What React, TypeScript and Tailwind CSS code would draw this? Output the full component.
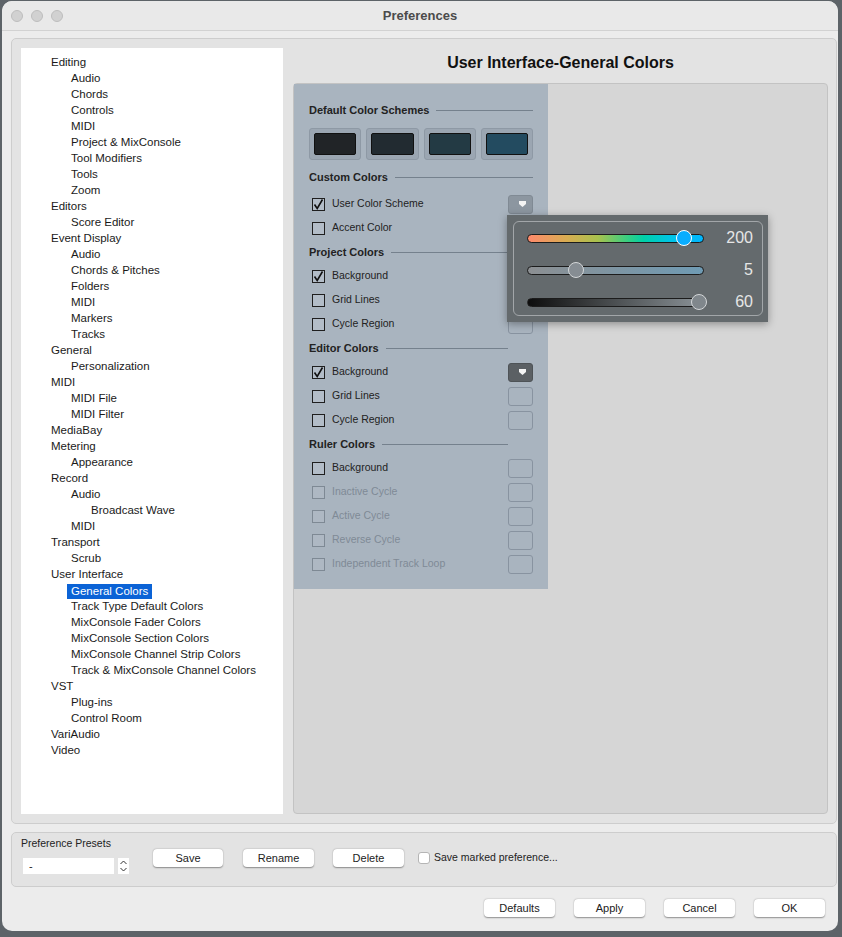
import React from "react";

type TreeItem = { label: string; level: number; selected?: boolean };

const tree: TreeItem[] = [
  { label: "Editing", level: 0 },
  { label: "Audio", level: 1 },
  { label: "Chords", level: 1 },
  { label: "Controls", level: 1 },
  { label: "MIDI", level: 1 },
  { label: "Project & MixConsole", level: 1 },
  { label: "Tool Modifiers", level: 1 },
  { label: "Tools", level: 1 },
  { label: "Zoom", level: 1 },
  { label: "Editors", level: 0 },
  { label: "Score Editor", level: 1 },
  { label: "Event Display", level: 0 },
  { label: "Audio", level: 1 },
  { label: "Chords & Pitches", level: 1 },
  { label: "Folders", level: 1 },
  { label: "MIDI", level: 1 },
  { label: "Markers", level: 1 },
  { label: "Tracks", level: 1 },
  { label: "General", level: 0 },
  { label: "Personalization", level: 1 },
  { label: "MIDI", level: 0 },
  { label: "MIDI File", level: 1 },
  { label: "MIDI Filter", level: 1 },
  { label: "MediaBay", level: 0 },
  { label: "Metering", level: 0 },
  { label: "Appearance", level: 1 },
  { label: "Record", level: 0 },
  { label: "Audio", level: 1 },
  { label: "Broadcast Wave", level: 2 },
  { label: "MIDI", level: 1 },
  { label: "Transport", level: 0 },
  { label: "Scrub", level: 1 },
  { label: "User Interface", level: 0 },
  { label: "General Colors", level: 1, selected: true },
  { label: "Track Type Default Colors", level: 1 },
  { label: "MixConsole Fader Colors", level: 1 },
  { label: "MixConsole Section Colors", level: 1 },
  { label: "MixConsole Channel Strip Colors", level: 1 },
  { label: "Track & MixConsole Channel Colors", level: 1 },
  { label: "VST", level: 0 },
  { label: "Plug-ins", level: 1 },
  { label: "Control Room", level: 1 },
  { label: "VariAudio", level: 0 },
  { label: "Video", level: 0 },
];

const indent = ["pl-[30px]", "pl-[50px]", "pl-[70px]"];

function SectionHeader({ title, short }: { title: string; short?: boolean }) {
  return (
    <div className="h-6 flex items-center">
      <span className="text-[11px] font-bold text-[#222]">{title}</span>
      <div className={`ml-[7px] h-px flex-1 bg-[#75818d] ${short ? "mr-[25px]" : ""}`} />
    </div>
  );
}

function Triangle() {
  return (
    <svg width="7" height="6" viewBox="0 0 7 6">
      <polygon points="0,0 7,0 7,3 3.5,6 0,3" fill="#f4f4f4" />
    </svg>
  );
}

// swatch: "empty" | "gray" | "dark"
function ColorRow({
  label,
  checked,
  disabled,
  swatch = "empty",
}: {
  label: string;
  checked?: boolean;
  disabled?: boolean;
  swatch?: "empty" | "gray" | "dark";
}) {
  const swatchCls =
    swatch === "gray"
      ? "bg-[#8c96a0] border-[#808a94]"
      : swatch === "dark"
      ? "bg-[#5b6064] border-[#4e5357]"
      : "border-[#8893a0]";
  return (
    <div className="h-6 flex items-center">
      <div
        className={`ml-[3px] w-[13px] h-[13px] border-[1.5px] flex items-center justify-center ${
          disabled ? "border-[#7e8994] bg-[#aeb8c3]" : "border-[#1f1f1f] bg-[#b3bdc8]"
        }`}
      >
        {checked && (
          <svg width="11" height="11" viewBox="0 0 11 11">
            <path d="M1.5 5.5 L4.2 9.5 L9.5 0.5" fill="none" stroke="#111" strokeWidth="1.6" />
          </svg>
        )}
      </div>
      <span className={`ml-[7px] text-[10.5px] ${disabled ? "text-[#7f8a96]" : "text-[#222]"}`}>
        {label}
      </span>
      <div
        className={`ml-auto w-[25px] h-[19px] rounded-[3px] border flex items-center justify-end pr-[6px] ${swatchCls}`}
      >
        {swatch !== "empty" && <Triangle />}
      </div>
    </div>
  );
}

function Slider({ track, thumb, pos, value }: { track: string; thumb: string; pos: number; value: string }) {
  return (
    <div className="h-8 flex items-center pl-[13px] pr-[9px]">
      <div className={`relative w-[177px] h-[9px] rounded-full border border-[#1c1c1c] ${track}`}>
        <div
          className={`absolute top-1/2 -translate-y-1/2 w-4 h-4 rounded-full border-[1.5px] ${thumb}`}
          style={{ left: pos - 8 }}
        />
      </div>
      <span className="flex-1 text-right text-[16px] text-[#e6e6e6]">{value}</span>
    </div>
  );
}

function Button({ label, w = "w-[71px]" }: { label: string; w?: string }) {
  return (
    <div
      className={`${w} h-[18px] bg-white rounded-[4px] shadow-[0_0.5px_1.5px_rgba(0,0,0,0.4)] flex items-center justify-center text-[11px] text-[#222]`}
    >
      {label}
    </div>
  );
}

export default function App() {
  const schemes = ["bg-[#212427]", "bg-[#222b31]", "bg-[#233a44]", "bg-[#234b60]"];

  return (
    <div className="w-[842px] h-[937px] bg-[#5d6368] overflow-hidden font-['Liberation_Sans',Arial,sans-serif]">
      <div className="ml-[2px] mt-[1px] w-[836px] h-[930px] bg-[#ececec] rounded-[10px] flex flex-col overflow-hidden">
        {/* Title bar */}
        <div className="h-[30px] flex-none grid grid-cols-[1fr_auto_1fr] items-center border-b border-[#d2d2d2] bg-[#e9e9e9]">
          <div className="flex items-center gap-[8px] pl-[9px]">
            <div className="w-3 h-3 rounded-full bg-[#d1d1d1] border border-[#bdbdbd]" />
            <div className="w-3 h-3 rounded-full bg-[#d1d1d1] border border-[#bdbdbd]" />
            <div className="w-3 h-3 rounded-full bg-[#d1d1d1] border border-[#bdbdbd]" />
          </div>
          <span className="text-[13px] font-bold text-[#4b4b4b]">Preferences</span>
          <div />
        </div>

        {/* Main group */}
        <div className="pl-[9px] pr-px pt-[7px]">
          <div className="h-[786px] flex bg-[#e3e3e3] border border-[#cdcdcd] rounded-[5px] pl-[9px] pt-[9px] pb-[9px]">
            {/* Tree */}
            <div className="w-[262px] bg-white pt-[7px]">
              {tree.map((t, i) => (
                <div key={i} className={`h-4 flex items-center text-[11.5px] text-[#1a1a1a] ${indent[t.level]}`}>
                  {t.selected ? (
                    <span className="-ml-[4px] px-[4px] leading-[15px] bg-[#0b63d6] text-white">{t.label}</span>
                  ) : (
                    t.label
                  )}
                </div>
              ))}
            </div>

            {/* Right panel */}
            <div className="ml-[10px] w-[535px] flex flex-col">
              <div className="h-[35px] flex justify-center pt-[3px] text-[16px] font-bold text-[#111]">
                User Interface-General Colors
              </div>
              <div className="flex-1 relative bg-[#d6d6d6] border border-[#c3c3c3] rounded-[4px]">
                <div className="w-[254px] bg-[#a9b4bf] px-[15px] pt-[14px] pb-[13px]">
                  <SectionHeader title="Default Color Schemes" />
                  <div className="mt-[6px] flex gap-[5px]">
                    {schemes.map((c, i) => (
                      <div
                        key={i}
                        className="flex-1 h-[32px] rounded-[3px] border border-[#8e99a5] bg-[#9ba6b2] p-[4px]"
                      >
                        <div className={`w-full h-full rounded-[2px] border border-[#111] ${c}`} />
                      </div>
                    ))}
                  </div>
                  <div className="mt-[5px]">
                    <SectionHeader title="Custom Colors" />
                  </div>
                  <div className="mt-[3px]">
                    <ColorRow label="User Color Scheme" checked swatch="gray" />
                    <ColorRow label="Accent Color" />
                    <SectionHeader title="Project Colors" />
                    <ColorRow label="Background" checked />
                    <ColorRow label="Grid Lines" />
                    <ColorRow label="Cycle Region" />
                    <SectionHeader title="Editor Colors" short />
                    <ColorRow label="Background" checked swatch="dark" />
                    <ColorRow label="Grid Lines" />
                    <ColorRow label="Cycle Region" />
                    <SectionHeader title="Ruler Colors" short />
                    <ColorRow label="Background" />
                    <ColorRow label="Inactive Cycle" disabled />
                    <ColorRow label="Active Cycle" disabled />
                    <ColorRow label="Reverse Cycle" disabled />
                    <ColorRow label="Independent Track Loop" disabled />
                  </div>
                </div>

                {/* Color picker popover */}
                <div className="absolute left-[213px] top-[131px] w-[261px] h-[107px] bg-[#646a6d] p-[6px] pr-[5px] shadow-[0_2px_8px_rgba(0,0,0,0.35)]">
                  <div className="h-full border border-[#a2a6a9] rounded-[6px]">
                    <Slider
                      track="bg-[linear-gradient(to_right,#ff8a6c,#d8ac52_22%,#a8c24e_40%,#30cf86_58%,#00d0a8_66%,#00c4e8_82%,#00b6ff)]"
                      thumb="bg-[#08adff] border-white"
                      pos={156}
                      value="200"
                    />
                    <Slider
                      track="bg-[linear-gradient(to_right,#8c8f92,#6f9bb4)]"
                      thumb="bg-[#868d93] border-[#d4d7d9]"
                      pos={48}
                      value="5"
                    />
                    <Slider
                      track="bg-[linear-gradient(to_right,#0d0d0d,#8b9398)]"
                      thumb="bg-[#80878c] border-[#d4d7d9]"
                      pos={171}
                      value="60"
                    />
                  </div>
                </div>
              </div>
            </div>
          </div>

          {/* Preference presets */}
          <div className="mt-[8px] h-[55px] flex bg-[#e3e3e3] border border-[#cdcdcd] rounded-[5px]">
            <div className="pl-[9px] pt-[4px]">
              <div className="h-[14px] flex items-center text-[10.5px] text-[#222]">Preference Presets</div>
              <div className="mt-[7px] flex items-center">
                <div className="ml-[2px] w-[91px] h-[16px] bg-white flex items-center pl-[6px] text-[11px] text-[#222]">
                  -
                </div>
                <div className="ml-[4px] w-[11px] h-[16px] bg-white flex items-center justify-center">
                  <svg width="9" height="14" viewBox="0 0 9 14">
                    <path d="M1.5 5 L4.5 2 L7.5 5 M1.5 9 L4.5 12 L7.5 9" fill="none" stroke="#333" strokeWidth="1" />
                  </svg>
                </div>
              </div>
            </div>
            <div className="ml-[24px] mt-[16px] flex items-start">
              <Button label="Save" w="w-[70px]" />
              <div className="ml-[20px]">
                <Button label="Rename" />
              </div>
              <div className="ml-[19px]">
                <Button label="Delete" />
              </div>
              <div className="ml-[14px] h-[18px] flex items-center">
                <div className="w-[12px] h-[12px] bg-white border border-[#b5b5b5] rounded-[3px]" />
                <span className="ml-[4px] text-[10.5px] text-[#222]">Save marked preference...</span>
              </div>
            </div>
          </div>
        </div>

        {/* Dialog buttons */}
        <div className="mt-[12px] flex justify-end gap-[19px] pr-[13px]">
          <Button label="Defaults" />
          <Button label="Apply" />
          <Button label="Cancel" />
          <Button label="OK" />
        </div>
      </div>
    </div>
  );
}
